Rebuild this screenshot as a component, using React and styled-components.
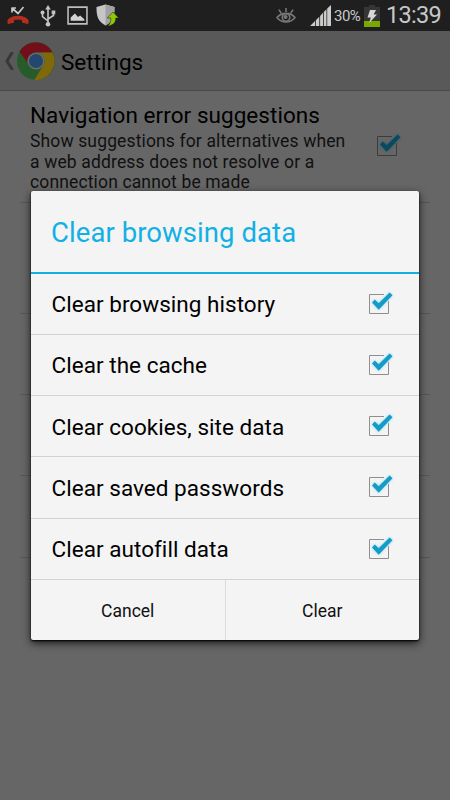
import React from 'react';
import styled, { createGlobalStyle } from 'styled-components';

const options = [
	'Clear browsing history',
	'Clear the cache',
	'Clear cookies, site data',
	'Clear saved passwords',
	'Clear autofill data'
];

const Check = ({ dim }) => (
	<CheckIcon viewBox="0 0 30 26" $dim={dim}>
		<path d="M18 4.5H3.5v19h19V11" className="box" />
		<path d="M6 12.4 8.8 9.4 12.7 13.3 23.6 2.4 26.5 5.3 12.7 19.8Z" className="tick" />
	</CheckIcon>
);

const MissedCall = () => (
	<svg width="22" height="20" viewBox="0 0 22 20">
		<path d="M5 1.5v5M5 2h4M5 2l6 5.5L16.5 1" fill="none" stroke="#c8c8c8" strokeWidth="1.7" />
		<path
			d="M1 17.5V14C5 9 17 9 21 14v3.5l-5.5-1.2v-2.5c-3-1-6-1-9 0v2.5Z"
			fill="#b52d1c"
			stroke="#b52d1c"
			strokeLinejoin="round"
		/>
	</svg>
);

const Usb = () => (
	<svg width="16" height="22" viewBox="0 0 16 22" fill="#c4c4c4">
		<path d="M8 3v16M2.5 7v4.5L8 16M13.5 7v3.5L8 14" fill="none" stroke="#c4c4c4" strokeWidth="1.6" />
		<path d="M8 0 10.8 4.5H5.2Z" />
		<circle cx="8" cy="19.3" r="2.3" />
		<circle cx="2.5" cy="7.5" r="2" />
		<path d="M11.7 5.5h3.6v3.7h-3.6z" />
	</svg>
);

const Picture = () => (
	<svg width="21" height="19" viewBox="0 0 20 18">
		<path d="M1 1h18v16H1z" fill="none" stroke="#bebebe" strokeWidth="1.5" />
		<path d="M3.5 14V11l4-4 3 3.5 2-1.5 4 3.5V14Z" fill="#d2d2d2" />
	</svg>
);

const Shield = () => (
	<svg width="23" height="23" viewBox="0 0 23 23">
		<path d="M9.5.5 18.5 3c0 9-1 14-9 18.5C1.5 17 .5 12 .5 3Z" fill="#c6c6c6" />
		<path d="M9.5.5 18.5 3c0 9-1 14-9 18.5Z" fill="#a2a2a2" />
		<path
			d="M17 8 22.8 14h-3c.1 4.5-2.5 7.3-8 8 2.3-2 3.2-5 3-8H11.2Z"
			fill="#8fc800"
			stroke="#1f1f1f"
			strokeWidth=".5"
		/>
	</svg>
);

const Eye = () => (
	<svg width="20" height="16" viewBox="0 0 20 16" fill="none" stroke="#777" strokeWidth="1.6">
		<path d="M1 9.5C5.5 4 14.5 4 19 9.5 14.5 15.5 5.5 15.5 1 9.5ZM10 4V0M5.3 5 2.8 1.6M14.7 5l2.5-3.4" />
		<circle cx="10" cy="9.5" r="3.8" />
		<circle cx="9.5" cy="9" r="1.3" fill="#777" />
	</svg>
);

const Signal = () => (
	<svg width="21" height="22" viewBox="0 0 21 22" fill="#cbcbcb">
		<path d="M0 21 5 16v5ZM5.8 15.2 9.3 11.7V21H5.8ZM10.1 10.9l2.9-3.2V21h-2.9ZM13.8 6.9 16.5 4.2V21h-2.7ZM17.2 3.5 21 0v21h-3.8Z" />
	</svg>
);

const Battery = () => (
	<svg width="16" height="22" viewBox="0 0 16 22">
		<path d="M5 0h6v2h5v20H0V2h5Z" fill="#363636" />
		<path d="M0 16h16v6H0Z" fill="#79a900" />
		<path d="M6 5h6L9.7 9.5H13L5.3 18l1.5-5.5H3.5Z" fill="#d7d7d7" />
	</svg>
);

const ChromeLogo = () => (
	<svg width="38" height="38" viewBox="0 0 38 38">
		<circle cx="19" cy="19" r="19" fill="#265b2a" />
		<path d="M2.6 9.5A19 19 0 0 1 35.5 10.5H19a8.5 8.5 0 0 0-8.2 10.8Z" fill="#730e1b" />
		<path d="M35.5 10.5A19 19 0 0 1 17.2 38L26.3 23.5A8.5 8.5 0 0 0 19 10.5Z" fill="#80690a" />
		<circle cx="19" cy="19" r="8.6" fill="#6a6a6a" />
		<circle cx="19" cy="19" r="7" fill="#22496d" />
	</svg>
);

export default function App() {
	return (
		<Screen>
			<GlobalStyle />
			<StatusBar>
				<Notifications>
					<MissedCall />
					<Usb />
					<Picture />
					<Shield />
				</Notifications>
				<SystemIcons>
					<Eye />
					<Signal />
					<Percent>30%</Percent>
					<Battery />
					<Clock>13:39</Clock>
				</SystemIcons>
			</StatusBar>
			<ActionBar>
				<svg width="9" height="18" viewBox="0 0 9 18">
					<path d="M7.5 0 2 9l5.5 9" fill="none" stroke="#383838" strokeWidth="3" />
				</svg>
				<ChromeLogo />
				<PageTitle>Settings</PageTitle>
			</ActionBar>
			<Preferences>
				<Preference $height={112}>
					<div>
						<PrefTitle>Navigation error suggestions</PrefTitle>
						<Summary>
							Show suggestions for alternatives when
							<br />a web address does not resolve or a
							<br />
							connection cannot be made
						</Summary>
					</div>
					<Check dim />
				</Preference>
				<Preference $height={111} />
				<Preference $height={81} />
				<Preference $height={81} />
				<Preference $height={82} />
			</Preferences>
			<Dialog>
				<DialogTitle>Clear browsing data</DialogTitle>
				{options.map(option => (
					<Option key={option}>
						<span>{option}</span>
						<Check />
					</Option>
				))}
				<Actions>
					<Action>Cancel</Action>
					<Action>Clear</Action>
				</Actions>
			</Dialog>
		</Screen>
	);
}

const GlobalStyle = createGlobalStyle`
	* {
		box-sizing: border-box;
	}
	body {
		margin: 0;
		background: #666;
	}
	svg {
		display: block;
		flex-shrink: 0;
	}
`;

const Screen = styled.div`
	position: relative;
	width: 450px;
	height: 800px;
	overflow: hidden;
	background: #666;
	color: #000;
	font-family: Roboto, sans-serif;
`;

const StatusBar = styled.header`
	display: flex;
	justify-content: space-between;
	height: 31px;
	padding: 0 8px 0 7px;
	background: #1f1f1f;
`;

const Notifications = styled.div`
	display: flex;
	align-items: center;
	gap: 11px;
	& > svg:last-child {
		margin-left: -3px;
	}
`;

const SystemIcons = styled.div`
	display: flex;
	align-items: center;
	color: #c8c8c8;
	${Notifications} + & > svg:first-child {
		margin-right: 14px;
	}
`;

const Percent = styled.span`
	width: 27px;
	margin: 1px 3px 0;
	font-size: 15px;
	letter-spacing: -0.5px;
`;

const Clock = styled.span`
	width: 56px;
	margin: -1px 0 0 6px;
	font-size: 23.5px;
	letter-spacing: -0.7px;
`;

const ActionBar = styled.div`
	display: flex;
	align-items: center;
	height: 60px;
	padding: 1px 0 0 5px;
	background: #595959;
	border-bottom: 1px solid #484848;
	& > svg + svg {
		margin-left: 3px;
	}
`;

const PageTitle = styled.h1`
	margin: 1px 0 0 6px;
	font-size: 22.5px;
	font-weight: 400;
	letter-spacing: 0;
`;

const Preferences = styled.main`
	padding: 0 20px;
`;

const Preference = styled.section`
	display: flex;
	justify-content: space-between;
	height: ${props => props.$height}px;
	padding: 10px 26px 0 10px;
	border-bottom: 1px solid #575757;
	& > svg {
		margin-top: 31px;
	}
`;

const PrefTitle = styled.h2`
	margin: 0;
	font-size: 22.5px;
	font-weight: 400;
	line-height: 28px;
	letter-spacing: 0.05px;
	white-space: nowrap;
`;

const Summary = styled.p`
	margin: 2px 0 0;
	color: #101010;
	font-size: 17.5px;
	line-height: 20.5px;
	letter-spacing: 0.14px;
	white-space: nowrap;
`;

const Dialog = styled.div`
	position: absolute;
	top: 191px;
	left: 31px;
	width: 388px;
	height: 449px;
	overflow: hidden;
	background: #f4f4f4;
	border-radius: 2px;
	box-shadow: 0 1px 2px #000, 0 3px 9px rgba(0, 0, 0, 0.75);
`;

const DialogTitle = styled.h2`
	height: 82.5px;
	margin: 0;
	padding: 1px 20px 0;
	border-bottom: 2px solid #12b0e0;
	color: #12b0e5;
	font-size: 27.5px;
	font-weight: 400;
	line-height: 82px;
	letter-spacing: 0.07px;
`;

const Option = styled.div`
	display: flex;
	align-items: center;
	justify-content: space-between;
	height: 61.25px;
	padding: 0 23px 0 20.5px;
	border-bottom: 1px solid #d2d2d2;
	font-size: 22.5px;
	letter-spacing: 0.04px;
	& > span {
		padding-top: 1px;
	}
	& > svg {
		margin-top: -2px;
	}
`;

const Actions = styled.div`
	display: flex;
	height: 60px;
`;

const Action = styled.button`
	flex: 1;
	padding: 2px 0 0;
	background: none;
	border: 0;
	color: #111;
	font: 17.5px Roboto, sans-serif;
	& + & {
		border-left: 1px solid #dcdcdc;
	}
`;

const CheckIcon = styled.svg`
	width: 30px;
	height: 26px;
	.box {
		fill: none;
		stroke: ${props => (props.$dim ? '#3c3c3c' : '#8e8e8e')};
	}
	.tick {
		fill: ${props => (props.$dim ? '#094a61' : '#159bc7')};
		filter: drop-shadow(0 0 1.5px ${props => (props.$dim ? '#28616f' : '#8bdcf2')});
	}
`;
